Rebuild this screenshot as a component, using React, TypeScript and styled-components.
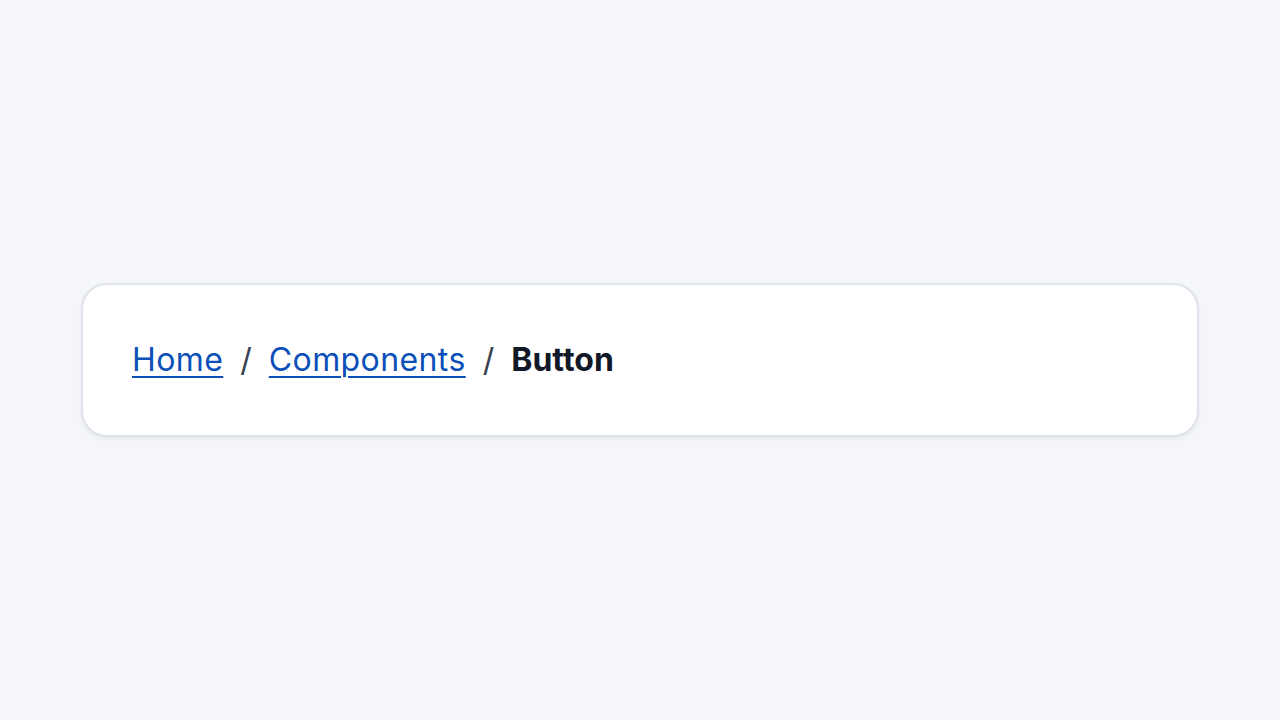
import React from "react";
import styled, { createGlobalStyle } from "styled-components";

const GlobalStyle = createGlobalStyle`
  html, body {
    margin: 0;
    padding: 0;
    background: #f5f6f9;
    font-family: Inter, "Noto Sans", sans-serif;
  }
`;

const Page = styled.div`
  min-height: 100vh;
  display: flex;
  align-items: center;
  padding: 0 81px;
  box-sizing: border-box;
`;

const Card = styled.nav`
  flex: 1;
  background: #ffffff;
  border: 2px solid #dfe3ea;
  border-radius: 26px;
  box-shadow: 0 2px 4px rgba(15, 23, 42, 0.06);
  padding: 50px 49px;
`;

const Trail = styled.ol`
  list-style: none;
  margin: 0;
  padding: 0;
  display: flex;
  align-items: center;
  gap: 17px;
  font-size: 32px;
  line-height: 50px;
`;

const Crumb = styled.li`
  display: flex;
  align-items: center;
`;

const Link = styled.a`
  color: #0b4fb8;
  letter-spacing: 0.4px;
  text-decoration: underline;
  text-decoration-thickness: 2px;
  text-underline-offset: 5px;
`;

const Current = styled.span`
  color: #111827;
  font-weight: 700;
`;

const Sep = styled.span`
  color: #374151;
`;

const items = [
  { label: "Home", href: "#" },
  { label: "Components", href: "#" },
  { label: "Button" },
];

export default function App() {
  return (
    <>
      <GlobalStyle />
      <Page>
        <Card aria-label="Breadcrumb">
          <Trail>
            {items.map((item, i) => (
              <React.Fragment key={item.label}>
                {i > 0 && <Sep aria-hidden>/</Sep>}
                <Crumb>
                  {item.href ? (
                    <Link href={item.href}>{item.label}</Link>
                  ) : (
                    <Current aria-current="page">{item.label}</Current>
                  )}
                </Crumb>
              </React.Fragment>
            ))}
          </Trail>
        </Card>
      </Page>
    </>
  );
}
